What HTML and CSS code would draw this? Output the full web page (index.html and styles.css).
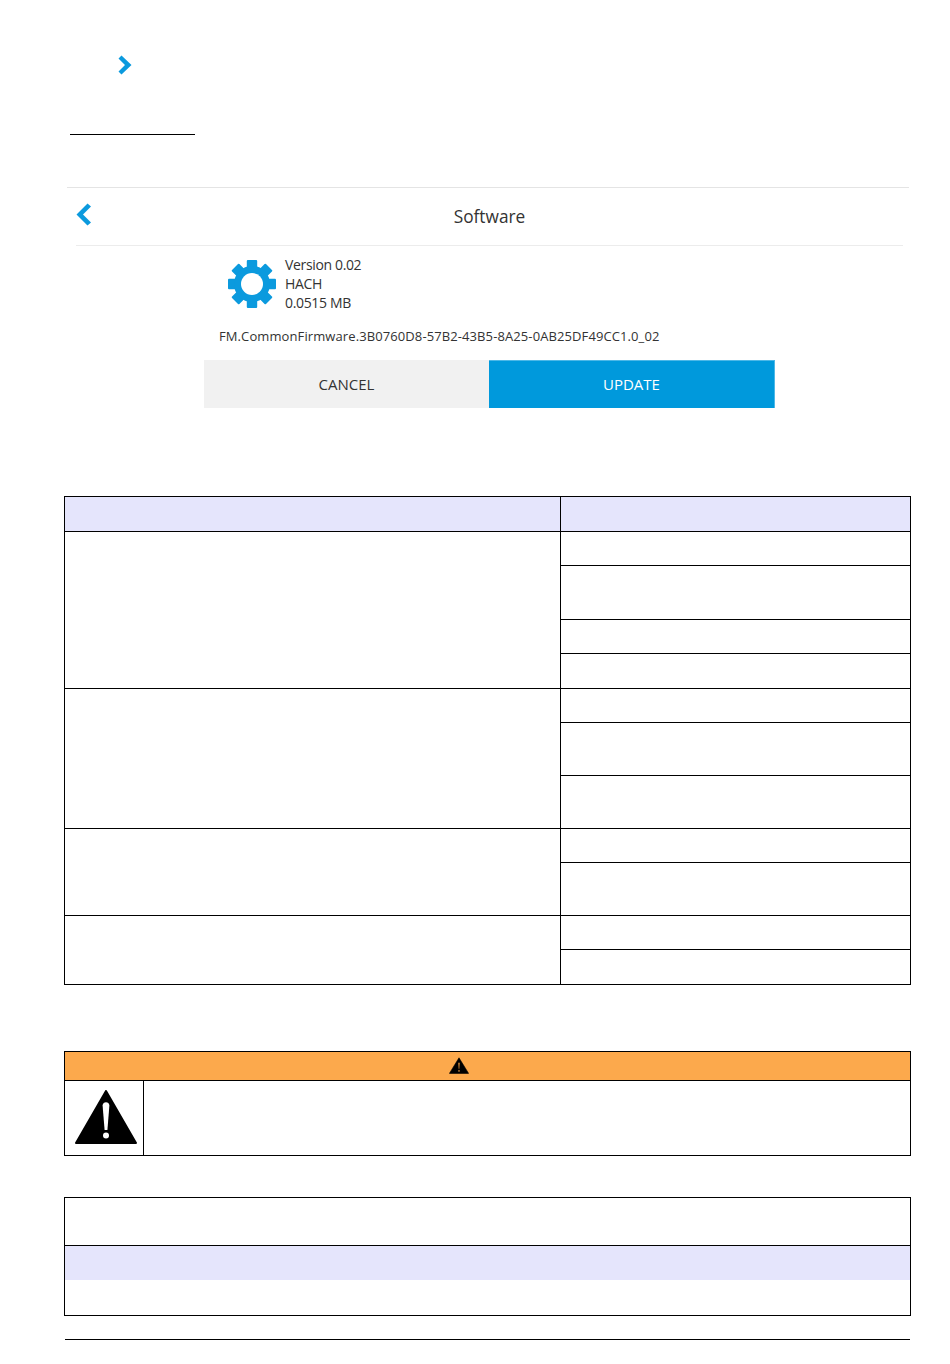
FILE: index.html
```html
<!DOCTYPE html>
<html lang="en">
<head>
    <meta charset="UTF-8">
    <meta name="viewport" content="width=device-width, initial-scale=1.0">
    <title>Software update</title>
    <link rel="stylesheet" href="styles.css">
</head>
<body>

<div class="page">
    <svg class="step-arrow" viewBox="0 0 14 20" width="14" height="20">
        <path d="M0.5 3.5 L3.5 0.5 L13.5 10 L3.5 19.5 L0.5 16.5 L7 10 Z" fill="#0b9ade"/>
    </svg>

    <div class="title-rule"></div>

    <div class="screen">
        <div class="screen-header">
            <svg class="back-arrow" viewBox="0 0 16 23" width="16" height="23">
                <path d="M15 3.5 L11.5 0.5 L0.5 11.5 L11.5 22.5 L15 19.5 L7 11.5 Z" fill="#0b9ade"/>
            </svg>
            <span class="screen-title">Software</span>
        </div>
        <div class="package">
            <svg class="gear" viewBox="0 0 48 48" width="48" height="48">
                <g fill="#0b9ade">
                    <rect x="18.8" y="0" width="10.4" height="48" rx="1"/>
                    <rect x="18.8" y="0" width="10.4" height="48" rx="1" transform="rotate(45 24 24)"/>
                    <rect x="18.8" y="0" width="10.4" height="48" rx="1" transform="rotate(90 24 24)"/>
                    <rect x="18.8" y="0" width="10.4" height="48" rx="1" transform="rotate(135 24 24)"/>
                </g>
                <circle cx="24" cy="24" r="14.5" fill="none" stroke="#0b9ade" stroke-width="7"/>
                <circle cx="24" cy="24" r="11" fill="#fff"/>
            </svg>
            <div class="package-info">
                <div>Version 0.02</div>
                <div>HACH</div>
                <div>0.0515 MB</div>
            </div>
        </div>
        <div class="file-name">FM.CommonFirmware.3B0760D8-57B2-43B5-8A25-0AB25DF49CC1.0_02</div>
        <div class="buttons">
            <div class="btn btn-cancel">CANCEL</div>
            <div class="btn btn-update">UPDATE</div>
        </div>
    </div>

    <table class="grid main-table">
        <colgroup>
            <col class="col-left">
            <col>
        </colgroup>
        <tr class="row-head"><th></th><th></th></tr>
        <tr class="row-s"><td rowspan="4"></td><td></td></tr>
        <tr class="row-xl"><td></td></tr>
        <tr class="row-s"><td></td></tr>
        <tr class="row-m"><td></td></tr>
        <tr class="row-s"><td rowspan="3"></td><td></td></tr>
        <tr class="row-l"><td></td></tr>
        <tr class="row-l"><td></td></tr>
        <tr class="row-s"><td rowspan="2"></td><td></td></tr>
        <tr class="row-l"><td></td></tr>
        <tr class="row-s"><td rowspan="2"></td><td></td></tr>
        <tr class="row-m"><td></td></tr>
    </table>

    <table class="grid warning">
        <colgroup>
            <col class="col-icon">
            <col>
        </colgroup>
        <tr class="warning-head">
            <th colspan="2">
                <svg class="warn-small" viewBox="0 0 20 17" width="20" height="17">
                    <path fill-rule="evenodd" stroke="#000" stroke-width="0.6" stroke-linejoin="round" d="M10 0.8 L19.6 16.4 H0.4 Z M9 5.5 L9.4 12 H10.6 L11 5.5 Z M10 12.8 A1.1 1.1 0 1 0 10 15 A1.1 1.1 0 1 0 10 12.8 Z"/>
                </svg>
            </th>
        </tr>
        <tr class="warning-body">
            <td>
                <svg class="warn-big" viewBox="0 0 62 54" width="62" height="54">
                    <path stroke="#000" stroke-width="2" stroke-linejoin="round" d="M31 1 L61 53 H1 Z"/>
                    <path fill="#fff" d="M27.6 15.5 C27.6 11 34.4 11 34.4 15.5 L32.4 40 H29.6 Z"/>
                    <circle fill="#fff" cx="31" cy="45.5" r="3"/>
                </svg>
            </td>
            <td></td>
        </tr>
    </table>

    <table class="grid note">
        <tr class="note-top"><td></td></tr>
        <tr class="note-band"><td></td></tr>
        <tr class="note-bottom"><td></td></tr>
    </table>

    <div class="footer-rule"></div>
</div>

</body>
</html>
```

FILE: styles.css
```css
body {
    font-family: "Open Sans", Arial, sans-serif;
    background-color: white;
    margin: 0;
    color: #333;
}
.page {
    width: 950px;
    height: 1364px;
    overflow: hidden;
    padding-top: 55px;
    box-sizing: border-box;
}
.step-arrow {
    display: block;
    margin-left: 118px;
}
.title-rule {
    width: 125px;
    height: 1px;
    margin: 59px 0 0 70px;
    background-color: #000;
}
.screen {
    margin: 52px 41px 0 67px;
    border-top: 1px solid #e4e4e4;
}
.screen-header {
    position: relative;
    height: 57px;
    margin: 0 6px 0 9px;
    border-bottom: 1px solid #ececec;
    display: flex;
    align-items: center;
    justify-content: center;
}
.back-arrow {
    position: absolute;
    left: 0;
    top: 15px;
}
.screen-title {
    font-size: 17.3px;
    margin-bottom: 1px;
}
.package {
    display: flex;
    margin: 9px 0 0 161px;
    align-items: flex-start;
}
.gear {
    margin-top: 5px;
}
.package-info {
    margin-left: 9px;
    font-size: 14px;
    line-height: 19px;
    letter-spacing: -0.35px;
}
.file-name {
    margin: 15px 0 0 152px;
    font-size: 13px;
    line-height: 19px;
    letter-spacing: 0.1px;
}
.buttons {
    display: flex;
    height: 48px;
    margin: 14px 0 0 137px;
}
.btn {
    display: flex;
    align-items: center;
    justify-content: center;
    font-size: 15px;
    box-sizing: border-box;
    padding-bottom: 1px;
}
.btn-cancel {
    width: 285px;
    background-color: #f1f1f1;
}
.btn-update {
    width: 286px;
    background-color: #0099dc;
    border-top: 1px solid #4db8e8;
    border-right: 1px solid #4db8e8;
    color: white;
    padding-bottom: 2px;
}
.grid {
    border-collapse: collapse;
    table-layout: fixed;
    width: 847px;
    margin-left: 64px;
}
.grid td, .grid th {
    border: 1px solid #000;
    padding: 0;
}
.main-table {
    margin-top: 88px;
}
.col-left {
    width: 496px;
}
.row-head th {
    height: 34px;
    background-color: #e5e5fc;
}
.row-s td {
    height: 33px;
}
.row-m td {
    height: 34px;
}
.row-l td {
    height: 52px;
}
.row-xl td {
    height: 53px;
}
.warning {
    margin-top: 66px;
}
.col-icon {
    width: 79px;
}
.warning-head th {
    height: 28px;
    background-color: #fca94c;
}
.warn-small {
    display: block;
    margin: 0 0 2px 384px;
}
.warning-body td {
    height: 74px;
}
.warn-big {
    display: block;
    margin: 0 0 2px 10px;
}
.note {
    margin-top: 41px;
}
.note-top td {
    height: 47px;
}
.note-band td {
    height: 34px;
    background-color: #e5e5fc;
    border-bottom: none;
}
.note-bottom td {
    height: 35px;
    border-top: none;
}
.footer-rule {
    width: 845px;
    height: 1px;
    margin: 23px 0 0 65px;
    background-color: #000;
}
```
